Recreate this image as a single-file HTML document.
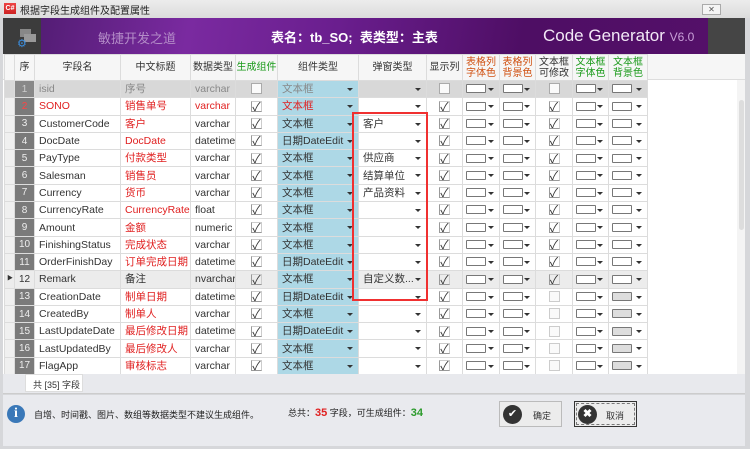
<!DOCTYPE html><html><head><meta charset="utf-8"><style>
*{box-sizing:border-box;margin:0;padding:0}
body{width:750px;height:449px;overflow:hidden;background:#d6d7da;font-family:"Liberation Sans","Noto Sans CJK SC",sans-serif;font-size:10px;color:#333;position:relative}
.abs{position:absolute}
#title{left:0;top:0;width:750px;height:18px;background:linear-gradient(#ececec,#dcdcdc)}
#banner{left:3px;top:18px;width:742px;height:36px;background:linear-gradient(100deg,#4a1a6a 0%,#7a2aa0 25%,#6a1e8e 45%,#4e0e64 70%,#55106a 100%)}
#gridwrap{left:3px;top:54px;width:742px;height:320px;background:#fff;overflow:hidden}
table{border-collapse:collapse;table-layout:fixed;position:absolute;left:1px;top:0;width:643px}
td,th{border:1px solid #dcdcdc;height:17.3px;padding:1px 4px 0;white-space:nowrap;overflow:hidden;font-weight:normal;font-size:10.5px;line-height:15px;vertical-align:middle}
th{height:26px;background:#f6f6f6;text-align:center;line-height:11px;color:#333;padding:0;font-size:10px}
.ind{background:#f0f0f0;padding:0}
.num{background:#7a7a7a;color:#eee;text-align:center;padding:0;font-size:10px}
.r{color:#e02020}
.zh{font-size:10.5px}
.comp{background:#add8e6;position:relative;font-size:10.5px}
.dd{position:relative}
.dd:after{content:"";position:absolute;right:5px;top:7px;border-left:3px solid transparent;border-right:3px solid transparent;border-top:3px solid #333}
.c{text-align:center;padding:0}
.cb{display:inline-block;width:11px;height:11px;border:1px solid #aaa;background:#fafafa;vertical-align:middle}
.ck{display:inline-block;width:11px;height:11px;vertical-align:middle;font-size:12px;line-height:10px;color:#333;border-left:1px solid #999;border-bottom:1px solid #999;border-top:1px solid #ccc;border-right:1px solid #ccc}
.sw{display:inline-block;width:20px;height:9px;border:1px solid #777;border-radius:1px;vertical-align:middle;background:#fff}
.g .sw.gr{background:#ddd}
.swc{padding:0 0 0 3px;position:relative}
.swc:after{content:"";position:absolute;right:5px;top:7px;border-left:3px solid transparent;border-right:3px solid transparent;border-top:3px solid #333}
tr.first td{background:#d8d8d8;color:#888}
tr.first td.num{background:#888;color:#ccc}
tr.first td.comp{background:#add8e6}
tr.sel td{background:#ececec}
tr.sel td.num{background:#ececec;color:#333}
tr.sel td.comp{background:#add8e6}
</style></head><body>
<div id="title" class="abs">
<div class="abs" style="left:4px;top:3px;width:12px;height:11px;background:linear-gradient(#e44,#c22);color:#fff;font-size:7px;line-height:11px;text-align:center;font-weight:bold">C#</div>
<div class="abs" style="left:20px;top:2px;font-size:10px;color:#222">根据字段生成组件及配置属性</div>
<div class="abs" style="left:702px;top:4px;width:19px;height:11px;border:1px solid #aaa;background:#f4f4f4;font-size:8px;line-height:9px;text-align:center;color:#555">✕</div>
</div>
<div id="banner" class="abs">
<div class="abs" style="left:0;top:0;width:38px;height:36px;background:#3c3c3c">
<div class="abs" style="left:17px;top:11px;width:11px;height:8px;background:#888"></div>
<div class="abs" style="left:21px;top:16px;width:12px;height:8px;background:#999"></div>
<div class="abs" style="left:14px;top:21px;font-size:11px;color:#3a8ee0;line-height:11px">⚙</div>
</div>
<div class="abs" style="left:95px;top:10px;font-size:13px;color:#b48cc8">敏捷开发之道</div>
<div class="abs" style="left:268px;top:9px;font-size:13px;color:#fff;font-weight:bold">表名：tb_SO;&nbsp; 表类型：主表</div>
<div class="abs" style="left:540px;top:8px;font-size:17px;color:#f2e8f6">Code Generator <span style="font-size:12px;color:#c9a0d8">V6.0</span></div>
<div class="abs" style="left:705px;top:0;width:37px;height:36px;background:#454545"></div>
</div>
<div id="gridwrap" class="abs">
<div class="abs" style="left:0;top:0;width:742px;height:26px;background:#f6f6f6;border-bottom:1px solid #ddd"></div>
<div class="abs" style="left:734px;top:26px;width:10px;height:294px;background:#f4f4f4"><div class="abs" style="left:2px;top:20px;width:5px;height:130px;background:#ddd;border-radius:3px"></div></div>
<table>
<colgroup><col style="width:10px"><col style="width:20px"><col style="width:86px"><col style="width:70px"><col style="width:45px"><col style="width:42px"><col style="width:81px"><col style="width:68px"><col style="width:36px"><col style="width:37px"><col style="width:36px"><col style="width:37px"><col style="width:36px"><col style="width:39px"></colgroup>
<tr><th></th><th>序</th><th>字段名</th><th>中文标题</th><th>数据类型</th><th style="color:#1a9a1a">生成组件</th><th>组件类型</th><th>弹窗类型</th><th>显示列</th><th style="color:#d05010">表格列<br>字体色</th><th style="color:#d05010">表格列<br>背景色</th><th>文本框<br>可修改</th><th style="color:#1a9a1a">文本框<br>字体色</th><th style="color:#1a9a1a">文本框<br>背景色</th></tr>
<tr class="first"><td class="ind"></td><td class="num">1</td><td>isid</td><td class="r zh">序号</td><td>varchar</td><td class="c"><span class="cb"></span></td><td class="comp dd">文本框</td><td class="dd"></td><td class="c"><span class="cb"></span></td><td class="swc"><span class="sw"></span></td><td class="swc"><span class="sw"></span></td><td class="c"><span class="cb"></span></td><td class="swc"><span class="sw"></span></td><td class="swc"><span class="sw"></span></td></tr>
<tr><td class="ind"></td><td class="num" style="color:#f44">2</td><td class="r">SONO</td><td class="r zh">销售单号</td><td class="r">varchar</td><td class="c"><span class="ck">✓</span></td><td class="comp dd r">文本框</td><td class="dd"></td><td class="c"><span class="ck">✓</span></td><td class="swc"><span class="sw"></span></td><td class="swc"><span class="sw"></span></td><td class="c"><span class="ck">✓</span></td><td class="swc"><span class="sw"></span></td><td class="swc"><span class="sw"></span></td></tr>
<tr><td class="ind"></td><td class="num">3</td><td>CustomerCode</td><td class="r zh">客户</td><td>varchar</td><td class="c"><span class="ck">✓</span></td><td class="comp dd">文本框</td><td class="dd zh">客户</td><td class="c"><span class="ck">✓</span></td><td class="swc"><span class="sw"></span></td><td class="swc"><span class="sw"></span></td><td class="c"><span class="ck">✓</span></td><td class="swc"><span class="sw"></span></td><td class="swc"><span class="sw"></span></td></tr>
<tr><td class="ind"></td><td class="num">4</td><td>DocDate</td><td class="r">DocDate</td><td>datetime</td><td class="c"><span class="ck">✓</span></td><td class="comp dd">日期DateEdit</td><td class="dd"></td><td class="c"><span class="ck">✓</span></td><td class="swc"><span class="sw"></span></td><td class="swc"><span class="sw"></span></td><td class="c"><span class="ck">✓</span></td><td class="swc"><span class="sw"></span></td><td class="swc"><span class="sw"></span></td></tr>
<tr><td class="ind"></td><td class="num">5</td><td>PayType</td><td class="r zh">付款类型</td><td>varchar</td><td class="c"><span class="ck">✓</span></td><td class="comp dd">文本框</td><td class="dd zh">供应商</td><td class="c"><span class="ck">✓</span></td><td class="swc"><span class="sw"></span></td><td class="swc"><span class="sw"></span></td><td class="c"><span class="ck">✓</span></td><td class="swc"><span class="sw"></span></td><td class="swc"><span class="sw"></span></td></tr>
<tr><td class="ind"></td><td class="num">6</td><td>Salesman</td><td class="r zh">销售员</td><td>varchar</td><td class="c"><span class="ck">✓</span></td><td class="comp dd">文本框</td><td class="dd zh">结算单位</td><td class="c"><span class="ck">✓</span></td><td class="swc"><span class="sw"></span></td><td class="swc"><span class="sw"></span></td><td class="c"><span class="ck">✓</span></td><td class="swc"><span class="sw"></span></td><td class="swc"><span class="sw"></span></td></tr>
<tr><td class="ind"></td><td class="num">7</td><td>Currency</td><td class="r zh">货币</td><td>varchar</td><td class="c"><span class="ck">✓</span></td><td class="comp dd">文本框</td><td class="dd zh">产品资料</td><td class="c"><span class="ck">✓</span></td><td class="swc"><span class="sw"></span></td><td class="swc"><span class="sw"></span></td><td class="c"><span class="ck">✓</span></td><td class="swc"><span class="sw"></span></td><td class="swc"><span class="sw"></span></td></tr>
<tr><td class="ind"></td><td class="num">8</td><td>CurrencyRate</td><td class="r">CurrencyRate</td><td>float</td><td class="c"><span class="ck">✓</span></td><td class="comp dd">文本框</td><td class="dd"></td><td class="c"><span class="ck">✓</span></td><td class="swc"><span class="sw"></span></td><td class="swc"><span class="sw"></span></td><td class="c"><span class="ck">✓</span></td><td class="swc"><span class="sw"></span></td><td class="swc"><span class="sw"></span></td></tr>
<tr><td class="ind"></td><td class="num">9</td><td>Amount</td><td class="r zh">金额</td><td>numeric</td><td class="c"><span class="ck">✓</span></td><td class="comp dd">文本框</td><td class="dd"></td><td class="c"><span class="ck">✓</span></td><td class="swc"><span class="sw"></span></td><td class="swc"><span class="sw"></span></td><td class="c"><span class="ck">✓</span></td><td class="swc"><span class="sw"></span></td><td class="swc"><span class="sw"></span></td></tr>
<tr><td class="ind"></td><td class="num">10</td><td>FinishingStatus</td><td class="r zh">完成状态</td><td>varchar</td><td class="c"><span class="ck">✓</span></td><td class="comp dd">文本框</td><td class="dd"></td><td class="c"><span class="ck">✓</span></td><td class="swc"><span class="sw"></span></td><td class="swc"><span class="sw"></span></td><td class="c"><span class="ck">✓</span></td><td class="swc"><span class="sw"></span></td><td class="swc"><span class="sw"></span></td></tr>
<tr><td class="ind"></td><td class="num">11</td><td>OrderFinishDay</td><td class="r zh">订单完成日期</td><td>datetime</td><td class="c"><span class="ck">✓</span></td><td class="comp dd">日期DateEdit</td><td class="dd"></td><td class="c"><span class="ck">✓</span></td><td class="swc"><span class="sw"></span></td><td class="swc"><span class="sw"></span></td><td class="c"><span class="ck">✓</span></td><td class="swc"><span class="sw"></span></td><td class="swc"><span class="sw"></span></td></tr>
<tr class="sel"><td class="ind" style="font-size:6px;padding:0 0 0 2px">▶</td><td class="num">12</td><td>Remark</td><td class="zh">备注</td><td>nvarchar</td><td class="c"><span class="ck">✓</span></td><td class="comp dd">文本框</td><td class="dd zh">自定义数...</td><td class="c"><span class="ck">✓</span></td><td class="swc"><span class="sw"></span></td><td class="swc"><span class="sw"></span></td><td class="c"><span class="ck">✓</span></td><td class="swc"><span class="sw"></span></td><td class="swc"><span class="sw"></span></td></tr>
<tr class="g"><td class="ind"></td><td class="num">13</td><td>CreationDate</td><td class="r zh">制单日期</td><td>datetime</td><td class="c"><span class="ck">✓</span></td><td class="comp dd">日期DateEdit</td><td class="dd"></td><td class="c"><span class="ck">✓</span></td><td class="swc"><span class="sw"></span></td><td class="swc"><span class="sw"></span></td><td class="c"><span class="cb" style="border-color:#ccc"></span></td><td class="swc"><span class="sw"></span></td><td class="swc"><span class="sw gr"></span></td></tr>
<tr class="g"><td class="ind"></td><td class="num">14</td><td>CreatedBy</td><td class="r zh">制单人</td><td>varchar</td><td class="c"><span class="ck">✓</span></td><td class="comp dd">文本框</td><td class="dd"></td><td class="c"><span class="ck">✓</span></td><td class="swc"><span class="sw"></span></td><td class="swc"><span class="sw"></span></td><td class="c"><span class="cb" style="border-color:#ccc"></span></td><td class="swc"><span class="sw"></span></td><td class="swc"><span class="sw gr"></span></td></tr>
<tr class="g"><td class="ind"></td><td class="num">15</td><td>LastUpdateDate</td><td class="r zh">最后修改日期</td><td>datetime</td><td class="c"><span class="ck">✓</span></td><td class="comp dd">日期DateEdit</td><td class="dd"></td><td class="c"><span class="ck">✓</span></td><td class="swc"><span class="sw"></span></td><td class="swc"><span class="sw"></span></td><td class="c"><span class="cb" style="border-color:#ccc"></span></td><td class="swc"><span class="sw"></span></td><td class="swc"><span class="sw gr"></span></td></tr>
<tr class="g"><td class="ind"></td><td class="num">16</td><td>LastUpdatedBy</td><td class="r zh">最后修改人</td><td>varchar</td><td class="c"><span class="ck">✓</span></td><td class="comp dd">文本框</td><td class="dd"></td><td class="c"><span class="ck">✓</span></td><td class="swc"><span class="sw"></span></td><td class="swc"><span class="sw"></span></td><td class="c"><span class="cb" style="border-color:#ccc"></span></td><td class="swc"><span class="sw"></span></td><td class="swc"><span class="sw gr"></span></td></tr>
<tr class="g"><td class="ind"></td><td class="num">17</td><td>FlagApp</td><td class="r zh">审核标志</td><td>varchar</td><td class="c"><span class="ck">✓</span></td><td class="comp dd">文本框</td><td class="dd"></td><td class="c"><span class="ck">✓</span></td><td class="swc"><span class="sw"></span></td><td class="swc"><span class="sw"></span></td><td class="c"><span class="cb" style="border-color:#ccc"></span></td><td class="swc"><span class="sw"></span></td><td class="swc"><span class="sw gr"></span></td></tr>
</table>
</div>
<div class="abs" style="left:352px;top:112px;width:76px;height:189px;border:2px solid #f03030"></div>
<div class="abs" style="left:3px;top:374px;width:742px;height:20px;background:#e8e9ed;border-bottom:1px solid #ccc"></div>
<div class="abs" style="left:25px;top:374px;width:58px;height:18px;background:#fff;border:1px solid #ddd;font-size:9px;text-align:right;padding:3px 2px 0 0">共 [35] 字段</div>
<div class="abs" style="left:3px;top:395px;width:742px;height:51px;background:#e9eaee"></div>
<div class="abs" style="left:7px;top:405px;width:18px;height:18px;border-radius:50%;background:#3a78b8;color:#fff;font-weight:bold;font-family:'Liberation Serif',serif;font-size:14px;text-align:center;line-height:18px">i</div>
<div class="abs" style="left:34px;top:408px;font-size:9px;color:#222">自增、时间戳、图片、数组等数据类型不建议生成组件。</div>
<div class="abs" style="left:288px;top:406px;font-size:9px;color:#222">总共：<b style="color:#e02020;font-size:11px">35</b> 字段，可生成组件：<b style="color:#2a9a2a;font-size:11px">34</b></div>
<div class="abs" style="left:499px;top:401px;width:63px;height:26px;border:1px solid #bbb;background:#ececec">
<div class="abs" style="left:3px;top:3px;width:19px;height:19px;border-radius:50%;background:#333;color:#fff;font-size:11px;text-align:center;line-height:19px">✔</div>
<div class="abs" style="left:33px;top:7px;font-size:9px">确定</div></div>
<div class="abs" style="left:574px;top:401px;width:63px;height:26px;border:1px solid #333;background:#ececec">
<div class="abs" style="left:1px;top:1px;right:1px;bottom:1px;border:1px dashed #777"></div>
<div class="abs" style="left:3px;top:3px;width:19px;height:19px;border-radius:50%;background:#333;color:#fff;font-size:11px;font-weight:bold;text-align:center;line-height:19px">✖</div>
<div class="abs" style="left:31px;top:7px;font-size:9px">取消</div></div>
</body></html>
